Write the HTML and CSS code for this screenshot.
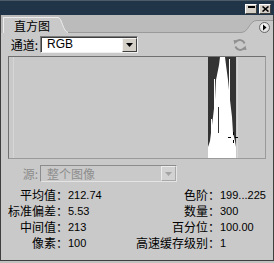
FILE: index.html
```html
<!DOCTYPE html>
<html lang="zh-CN">
<head>
    <meta charset="UTF-8">
    <meta name="viewport" content="width=device-width, initial-scale=1.0">
    <title>直方图</title>
    <link rel="stylesheet" href="styles.css">
</head>
<body>
    <div class="panel">
        <div class="titlebar">
            <span class="tbtn min"><span class="bar"></span></span>
            <span class="tbtn close">
                <svg width="7" height="6" viewBox="0 0 7 6"><path d="M0.5 0.5 L6.5 5.5 M6.5 0.5 L0.5 5.5" stroke="#000" stroke-width="1.6" fill="none"/></svg>
            </span>
        </div>
        <div class="frame">
            <div class="tabrow">
                <div class="tab">直方图</div>
                <svg class="tab-slant" width="12" height="16" viewBox="0 0 12 16">
                    <path d="M0 0 L2 0 C6 0 7 15 12 16 L0 16 Z" fill="#c9c9c9"/>
                    <path d="M0 0.5 L2 0.5 C6 0.5 7 15 12 15.5" stroke="#ececec" fill="none"/>
                </svg>
                <div class="tab-line"></div>
                <svg class="wing-curve" width="16" height="13" viewBox="0 0 16 13">
                    <path d="M0 13 L0 12.5 C8 12.5 8 0.5 16 0.5 L16 13 Z" fill="#c9c9c9"/>
                    <path d="M0 12.5 C8 12.5 8 0.5 16 0.5" stroke="#9a9a9a" fill="none"/>
                </svg>
                <div class="wing">
                    <span class="menu-btn">
                        <svg width="9" height="9" viewBox="0 0 9 9"><path d="M3 1.5 L6.5 4.5 L3 7.5 Z" fill="#000"/></svg>
                    </span>
                </div>
            </div>
            <div class="content">
                <div class="field-row">
                    <span class="field-label">通道:</span>
                    <div class="select channel">
                        <span class="select-value">RGB</span>
                        <span class="select-btn">
                            <svg width="7" height="4" viewBox="0 0 7 4"><path d="M0 0 L7 0 L3.5 4 Z" fill="#000"/></svg>
                        </span>
                    </div>
                    <svg class="refresh" width="14" height="14" viewBox="0 0 14 14">
                        <path d="M11.5 5.5 A5 5 0 0 0 2.6 4.3" stroke="#8f8f8f" stroke-width="2" fill="none"/>
                        <path d="M2.5 8.5 A5 5 0 0 0 11.4 9.7" stroke="#8f8f8f" stroke-width="2" fill="none"/>
                        <path d="M0.5 2 L4.5 2.5 L1.5 6.5 Z" fill="#8f8f8f"/>
                        <path d="M13.5 12 L9.5 11.5 L12.5 7.5 Z" fill="#8f8f8f"/>
                    </svg>
                </div>
                <div class="histogram">
                    <svg width="256" height="101" viewBox="0 0 256 101">
                        <rect x="4" y="0" width="1" height="101" fill="#d6d6d6"/>
                        <rect x="228" y="0" width="1" height="101" fill="#d6d6d6"/>
                        <rect x="199" y="0" width="28" height="101" fill="#333"/>
                        <polygon fill="#fff" points="199,101 199,90 201,84 202,76 204,60 206,43 207,23 210,8 211,0 216,0 217,8 219,23 221,43 223,60 224,76 226,84 227,90 227,101"/>
                        <rect x="199" y="90" width="28" height="11" fill="#fff"/>
                        <rect x="205" y="22" width="1" height="70" fill="#fff"/>
                        <rect x="220" y="2" width="1" height="44" fill="#fff"/>
                        <rect x="202" y="62" width="1" height="28" fill="#fff"/>
                        <rect x="209" y="50" width="1" height="26" fill="#333"/>
                        <path d="M219 80.5 H222 M226 80.5 H229 M224.5 75 V78 M224.5 83 V86" stroke="#000" fill="none"/>
                    </svg>
                </div>
                <div class="field-row source">
                    <span class="field-label">源:</span>
                    <div class="select disabled">
                        <span class="select-value">整个图像</span>
                        <span class="select-btn">
                            <svg width="7" height="4" viewBox="0 0 7 4"><path d="M0 0 L7 0 L3.5 4 Z" fill="#a4a4a4"/></svg>
                        </span>
                    </div>
                </div>
                <div class="stats">
                    <span class="stat-label">平均值：</span><span class="stat-value">212.74</span>
                    <span class="stat-label">色阶：</span><span class="stat-value">199...225</span>
                    <span class="stat-label">标准偏差：</span><span class="stat-value">5.53</span>
                    <span class="stat-label">数量：</span><span class="stat-value">300</span>
                    <span class="stat-label">中间值：</span><span class="stat-value">213</span>
                    <span class="stat-label">百分位：</span><span class="stat-value">100.00</span>
                    <span class="stat-label">像素：</span><span class="stat-value">100</span>
                    <span class="stat-label">高速缓存级别：</span><span class="stat-value">1</span>
                </div>
            </div>
        </div>
    </div>
</body>
</html>
```

FILE: styles.css
```css
html, body {
    margin: 0;
    padding: 0;
}
body {
    width: 274px;
    height: 263px;
    background-color: #c2c2c2;
    font-family: "Noto Sans CJK SC", sans-serif;
    font-size: 12px;
    color: #000;
}
.panel {
    width: 274px;
    height: 261px;
    display: flex;
    flex-direction: column;
}
.titlebar {
    height: 15px;
    box-sizing: border-box;
    background-color: #213549;
    border-top: 1px solid #4e5c68;
    display: flex;
    justify-content: flex-end;
    align-items: flex-start;
    gap: 2px;
    padding: 3px 3px 0 0;
}
.tbtn {
    width: 12px;
    height: 10px;
    box-sizing: border-box;
    background-color: #d4d0c8;
    border: 1px solid;
    border-color: #fff #404040 #404040 #fff;
    display: flex;
    justify-content: center;
}
.tbtn.min .bar {
    width: 7px;
    height: 2px;
    margin-top: 1px;
    background-color: #000;
}
.tbtn.close {
    align-items: center;
}
.tbtn.close svg {
    display: block;
}
.frame {
    flex: 1;
    display: flex;
    flex-direction: column;
    border: 1px solid #3e3e3e;
    border-top: none;
    background-color: #c9c9c9;
}
.tabrow {
    height: 18px;
    display: flex;
    align-items: flex-end;
    background-color: #bbbbbb;
}
.tab {
    height: 16px;
    width: 53px;
    box-sizing: border-box;
    margin-left: 2px;
    padding-left: 10px;
    background-color: #c9c9c9;
    border-top: 1px solid #ececec;
    border-left: 1px solid #ececec;
    line-height: 15px;
}
.tab-slant,
.wing-curve {
    display: block;
}
.tab-line {
    flex: 1;
    height: 1px;
    background-color: #9a9a9a;
}
.wing {
    width: 16px;
    height: 13px;
    box-sizing: border-box;
    background-color: #c9c9c9;
    border-top: 1px solid #9a9a9a;
    padding: 1px 0 0 2px;
}
.menu-btn {
    width: 11px;
    height: 11px;
    box-sizing: border-box;
    border: 1px solid #6a6a6a;
    border-radius: 50%;
    background: radial-gradient(circle at 40% 35%, #ffffff, #cfcfcf);
    display: flex;
    align-items: center;
    justify-content: center;
}
.menu-btn svg {
    display: block;
}
.content {
    padding: 3px 7px 0 7px;
    display: flex;
    flex-direction: column;
}
.field-row {
    height: 17px;
    display: flex;
    align-items: center;
}
.field-label {
    width: 30px;
    margin-right: 2px;
    text-align: right;
    line-height: 17px;
}
.select {
    height: 17px;
    box-sizing: border-box;
    display: flex;
    align-items: stretch;
    border: 1px solid;
    border-color: #7a7a7a #efefef #efefef #7a7a7a;
    box-shadow: inset 1px 1px 0 #404040;
    background-color: #fff;
}
.select.channel {
    width: 98px;
}
.select-value {
    flex: 1;
    padding-left: 6px;
    font-family: "Liberation Sans", Arial, sans-serif;
    font-size: 12px;
    line-height: 15px;
}
.select-btn {
    width: 15px;
    box-sizing: border-box;
    margin: 1px 0 0 0;
    background-color: #d4d0c8;
    border: 1px solid;
    border-color: #f4f4f4 #404040 #404040 #f4f4f4;
    display: flex;
    align-items: center;
    justify-content: center;
}
.select-btn svg {
    display: block;
}
.refresh {
    display: block;
    margin-left: auto;
    margin-right: 19px;
}
.histogram {
    margin-top: 3px;
    width: 258px;
    height: 103px;
    box-sizing: border-box;
    border: 1px solid;
    border-color: #707070 #9a9a9a #9a9a9a #707070;
}
.histogram svg {
    display: block;
}
.field-row.source {
    margin-top: 6px;
}
.source .field-label {
    color: #8c8c8c;
}
.select.disabled {
    width: 137px;
    background-color: #c9c9c9;
    border-color: #8c8c8c #e4e4e4 #e4e4e4 #8c8c8c;
    box-shadow: none;
}
.select.disabled .select-value {
    font-family: "Noto Sans CJK SC", sans-serif;
    color: #8e8e8e;
}
.select.disabled .select-btn {
    margin: 0;
    background-color: #d2d2d2;
    border-color: #ececec #a8a8a8 #a8a8a8 #ececec;
}
.stats {
    margin-top: 5px;
    display: grid;
    grid-template-columns: 60px 68px 84px 1fr;
    grid-auto-rows: 16px;
    line-height: 16px;
}
.stat-label {
    text-align: right;
    white-space: nowrap;
}
.stat-value {
    font-family: "Liberation Sans", Arial, sans-serif;
    font-size: 11px;
}
```
